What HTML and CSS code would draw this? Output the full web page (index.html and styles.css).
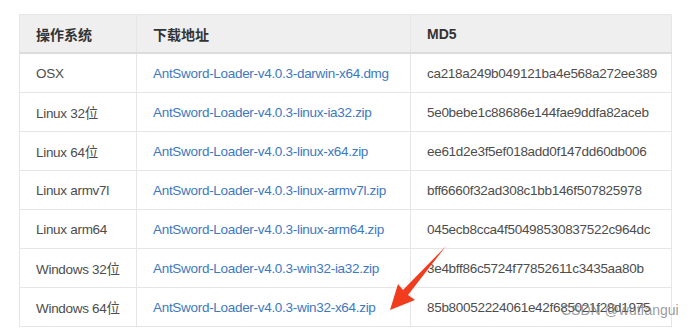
FILE: index.html
```html
<!DOCTYPE html>
<html lang="zh-CN">
<head>
    <meta charset="UTF-8">
    <title>AntSword Loader 下载</title>
    <link rel="stylesheet" href="styles.css">
</head>
<body>
    <div class="page">
        <table class="dl-table">
            <colgroup>
                <col class="col-os">
                <col class="col-url">
                <col class="col-md5">
            </colgroup>
            <thead>
                <tr>
                    <th>操作系统</th>
                    <th>下载地址</th>
                    <th>MD5</th>
                </tr>
            </thead>
            <tbody>
                <tr>
                    <td>OSX</td>
                    <td><a href="#">AntSword-Loader-v4.0.3-darwin-x64.dmg</a></td>
                    <td>ca218a249b049121ba4e568a272ee389</td>
                </tr>
                <tr>
                    <td>Linux 32位</td>
                    <td><a href="#">AntSword-Loader-v4.0.3-linux-ia32.zip</a></td>
                    <td>5e0bebe1c88686e144fae9ddfa82aceb</td>
                </tr>
                <tr>
                    <td>Linux 64位</td>
                    <td><a href="#">AntSword-Loader-v4.0.3-linux-x64.zip</a></td>
                    <td>ee61d2e3f5ef018add0f147dd60db006</td>
                </tr>
                <tr>
                    <td>Linux armv7l</td>
                    <td><a href="#">AntSword-Loader-v4.0.3-linux-armv7l.zip</a></td>
                    <td>bff6660f32ad308c1bb146f507825978</td>
                </tr>
                <tr>
                    <td>Linux arm64</td>
                    <td><a href="#">AntSword-Loader-v4.0.3-linux-arm64.zip</a></td>
                    <td>045ecb8cca4f50498530837522c964dc</td>
                </tr>
                <tr>
                    <td>Windows 32位</td>
                    <td><a href="#">AntSword-Loader-v4.0.3-win32-ia32.zip</a></td>
                    <td>3e4bff86c5724f77852611c3435aa80b</td>
                </tr>
                <tr>
                    <td>Windows 64位</td>
                    <td><a href="#">AntSword-Loader-v4.0.3-win32-x64.zip</a></td>
                    <td>85b80052224061e42f685021f28d1975</td>
                </tr>
            </tbody>
        </table>

        <!-- red annotation arrow -->
        <svg class="arrow" width="70" height="70" viewBox="0 0 70 70">
            <path d="M63 2 L20 46 L15 40 L7 66 L32 56 L25 51 Z" fill="#f23c1e"/>
        </svg>

        <div class="watermark">CSDN @wutfangui</div>
    </div>
</body>
</html>
```

FILE: styles.css
```css
body {
    margin: 0;
    background-color: #fff;
    font-family: "Segoe UI", "Liberation Sans", "Noto Sans CJK SC", sans-serif;
    font-size: 13.5px;
    letter-spacing: -0.3px;
    color: #4d4d4d;
}
.page {
    position: relative;
    padding: 14px 0 0 19px;
    width: 692px;
    height: 332px;
    box-sizing: border-box;
}
.dl-table {
    border-collapse: collapse;
    width: 652px;
    table-layout: fixed;
}
.col-os {
    width: 117px;
}
.col-url {
    width: 274px;
}
.col-md5 {
    width: 261px;
}
.dl-table th,
.dl-table td {
    border: 1px solid #e6e6e6;
    padding: 0 16px;
    height: 38px;
    text-align: left;
    white-space: nowrap;
    overflow: hidden;
}
.dl-table th {
    background-color: #efefef;
    color: #333;
    font-weight: bold;
    font-size: 14px;
    letter-spacing: 0;
    border-bottom: 2px solid #dcdcdc;
    height: 37px;
}
.dl-table a {
    color: #4078c0;
    text-decoration: none;
}
.arrow {
    position: absolute;
    left: 383px;
    top: 244px;
}
.watermark {
    position: absolute;
    left: 561px;
    top: 302px;
    font-size: 14px;
    letter-spacing: 0;
    color: rgba(120, 120, 120, 0.75);
}
```
